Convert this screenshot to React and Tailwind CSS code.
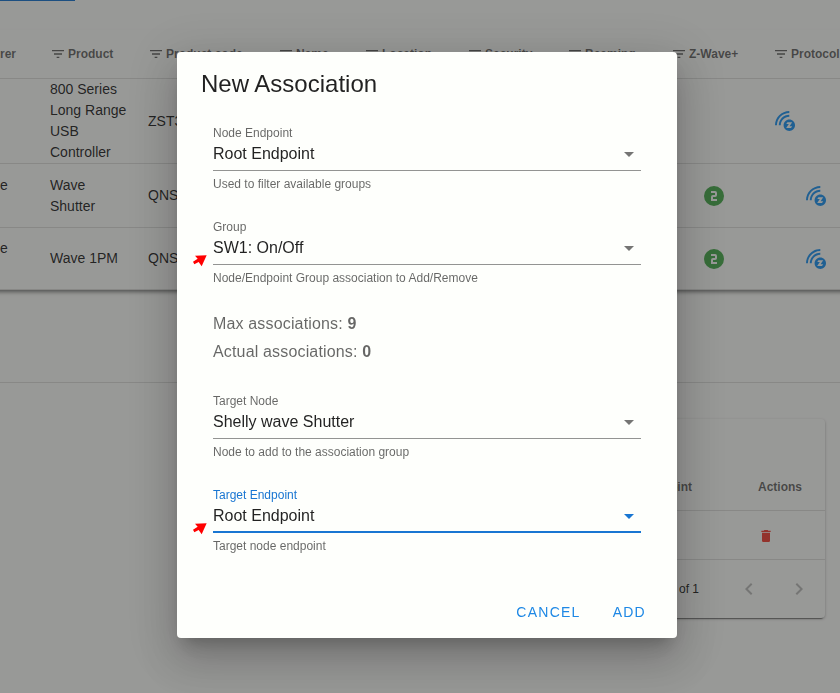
import React from "react";

const PATHS = {
  filter: "M6,13H18V11H6M3,6V8H21V6M10,18H14V16H10V18Z",
  zwave:
    "M16.3,10.58C13.14,10.58 10.6,13.13 10.6,16.28C10.6,19.43 13.15,22 16.3,22C19.45,22 22,19.43 22,16.28C22,13.13 19.45,10.58 16.3,10.58M18,19.08H13.19L15.81,15H13.31L14.4,13.23H19.18L16.57,17.31H19.18L18,19.08M16.3,3.93V2C8.41,2 2,8.42 2,16.31H3.92C3.94,9.46 9.5,3.93 16.3,3.93M16.3,7.74V5.82C10.5,5.82 5.81,10.53 5.81,16.31H7.73C7.75,11.58 11.59,7.74 16.3,7.74",
  plusBadge:
    "M9,7V9H13V11H11A2,2 0 0,0 9,13V17H15V15H11V13H13A2,2 0 0,0 15,11V9A2,2 0 0,0 13,7H9M12,2A10,10 0 0,1 22,12A10,10 0 0,1 12,22A10,10 0 0,1 2,12A10,10 0 0,1 12,2Z",
  trash: "M19,4H15.5L14.5,3H9.5L8.5,4H5V6H19M6,19A2,2 0 0,0 8,21H16A2,2 0 0,0 18,19V7H6V19Z",
  left: "M15.41,16.58L10.83,12L15.41,7.41L14,6L8,12L14,18L15.41,16.58Z",
  right: "M8.59,16.58L13.17,12L8.59,7.41L10,6L16,12L10,18L8.59,16.58Z",
  down: "M7,10L12,15L17,10H7Z",
};

function Icon({ name, className }) {
  return (
    <svg viewBox="0 0 24 24" fill="currentColor" fillRule="evenodd" className={className} aria-hidden="true">
      <path d={PATHS[name]} />
    </svg>
  );
}

function Arrow() {
  return (
    <svg viewBox="0 0 42 36" className="absolute -left-5 top-9 h-3 w-3.5 text-[#ff0000]" aria-hidden="true">
      <path fill="currentColor" d="M41 1L6 2L14 11L0 20L4 28L17 21L26 34Z" />
    </svg>
  );
}

function Field({ id, label, value, hint, active, marked }) {
  return (
    <div className="relative">
      {marked && <Arrow />}
      <label htmlFor={id} className={`block text-xs leading-4 ${active ? "text-[#1976d2]" : "text-black/60"}`}>
        {label}
      </label>
      <div className="relative">
        <select
          id={id}
          className={`block h-[30px] w-full appearance-none bg-transparent pr-8 text-base leading-6 text-black/87 outline-none ${
            active ? "border-b-2 border-[#1976d2] pb-[3px]" : "border-b border-black/42 pb-1"
          }`}
        >
          <option>{value}</option>
        </select>
        <Icon
          name="down"
          className={`pointer-events-none absolute right-0 top-px size-6 ${active ? "text-[#1976d2]" : "text-black/54"}`}
        />
      </div>
      <p className="mt-[5px] text-xs leading-4 text-black/60">{hint}</p>
    </div>
  );
}

const columns = ["Product", "Product code", "Name", "Location", "Security", "Beaming", "Z-Wave+", "Protocol"];

const nodes = [
  { maker: "", product: "800 Series Long Range USB Controller", code: "ZST39", plus: false, height: "h-[85px]" },
  { maker: "e", product: "Wave Shutter", code: "QNSH-001", plus: true, height: "h-16" },
  { maker: "e", product: "Wave 1PM", code: "QNSW-001", plus: true, height: "h-[62px]" },
];

function NodesTable() {
  return (
    <div className="-mx-2 overflow-hidden px-2 shadow-[0_3px_4px_-1px_rgba(0,0,0,0.5)]">
      <table className="w-[875px] table-fixed border-separate border-spacing-0 text-left text-sm leading-[21px] text-black/87">
        <colgroup>
          <col className="w-[34px]" />
          <col className="w-[98px]" />
          <col className="w-[130px]" />
          <col className="w-[86px]" />
          <col className="w-[103px]" />
          <col className="w-[100px]" />
          <col className="w-[104px]" />
          <col className="w-[102px]" />
          <col className="w-[118px]" />
        </colgroup>
        <thead>
          <tr className="h-[49px] text-xs text-black/60">
            <th className="border-b border-black/12">rer</th>
            {columns.map((c) => (
              <th key={c} className="whitespace-nowrap border-b border-black/12 pl-4">
                <span className="flex items-center gap-0.5">
                  <Icon name="filter" className="size-4 shrink-0" />
                  {c}
                </span>
              </th>
            ))}
          </tr>
        </thead>
        <tbody>
          {nodes.map((n) => (
            <tr key={n.product} className={n.height}>
              <td className="border-b border-black/12">
                <div className="h-[42px]">{n.maker}</div>
              </td>
              <td className="border-b border-black/12 pl-4">{n.product}</td>
              <td className="border-b border-black/12 pl-4">{n.code}</td>
              <td className="border-b border-black/12" colSpan={4} />
              <td className="border-b border-black/12 pl-8 pr-4">
                {n.plus && <Icon name="plusBadge" className="mx-auto size-6 text-[#4caf50]" />}
              </td>
              <td className="border-b border-black/12 px-4">
                <Icon name="zwave" className={`size-6 text-[#2196f3] ${n.plus ? "mx-auto" : ""}`} />
              </td>
            </tr>
          ))}
        </tbody>
      </table>
    </div>
  );
}

function AssociationsCard() {
  return (
    <div className="ml-auto mr-[15px] w-3/4 rounded pt-11 text-xs shadow-[0_3px_1px_-2px_rgba(0,0,0,0.4),0_1px_3px_rgba(0,0,0,0.3)]">
      <table className="w-full table-fixed border-separate border-spacing-0">
        <colgroup>
          <col />
          <col className="w-[83px]" />
        </colgroup>
        <thead>
          <tr className="h-12 text-black/60">
            <th className="border-b border-black/12 pr-[50px] text-right">Target Endpoint</th>
            <th className="border-b border-black/12 pl-4 text-left">Actions</th>
          </tr>
        </thead>
        <tbody>
          <tr className="h-[49px]">
            <td className="border-b border-black/12" />
            <td className="border-b border-black/12 pl-4 pt-0.5">
              <button type="button" aria-label="Delete" className="block text-[#f44336]">
                <Icon name="trash" className="size-4" />
              </button>
            </td>
          </tr>
        </tbody>
      </table>
      <div className="flex h-[58px] items-center justify-end gap-3.5 pr-2 text-black/87">
        <span className="mr-[18px]">1-1 of 1</span>
        <button type="button" aria-label="Previous page" className="flex size-9 items-center justify-center text-black/26">
          <Icon name="left" className="size-6" />
        </button>
        <button type="button" aria-label="Next page" className="flex size-9 items-center justify-center text-black/26">
          <Icon name="right" className="size-6" />
        </button>
      </div>
    </div>
  );
}

function AssociationDialog() {
  return (
    <div
      role="dialog"
      aria-labelledby="dialog-title"
      className="w-[500px] max-w-full rounded bg-[#fefffc] shadow-[0_11px_15px_-7px_rgba(0,0,0,0.2),0_24px_38px_3px_rgba(0,0,0,0.14),0_9px_46px_8px_rgba(0,0,0,0.12)]"
    >
      <h2 id="dialog-title" className="px-6 pt-4 text-2xl leading-8 text-black/87">
        New Association
      </h2>
      <div className="px-9 pt-[25px]">
        <div className="flex flex-col gap-[27px]">
          <Field id="node-endpoint" label="Node Endpoint" value="Root Endpoint" hint="Used to filter available groups" />
          <Field id="group" label="Group" value="SW1: On/Off" hint="Node/Endpoint Group association to Add/Remove" marked />
        </div>
        <div className="mb-[27px] mt-6 text-base leading-7 tracking-[0.01em] text-black/60">
          <p>
            Max associations: <b>9</b>
          </p>
          <p>
            Actual associations: <b>0</b>
          </p>
        </div>
        <div className="flex flex-col gap-[27px]">
          <Field id="target-node" label="Target Node" value="Shelly wave Shutter" hint="Node to add to the association group" />
          <Field id="target-endpoint" label="Target Endpoint" value="Root Endpoint" hint="Target node endpoint" active marked />
        </div>
      </div>
      <div className="flex justify-end pb-2 pr-[15px] pt-10 text-sm tracking-[0.09em] text-[#1e88e5]">
        <button type="button" className="h-9 px-4">
          CANCEL
        </button>
        <button type="button" className="h-9 px-4">
          ADD
        </button>
      </div>
    </div>
  );
}

export default function App() {
  return (
    <div className="min-h-screen overflow-hidden bg-[#fefffc] font-['Liberation_Sans',Arial,sans-serif]">
      <div className="h-[30px]">
        <div className="h-px w-[75px] bg-[#1976d2]" />
      </div>
      <NodesTable />
      <div className="mb-9 h-[93px] border-b border-black/12" />
      <AssociationsCard />
      <div className="fixed inset-0 flex items-center justify-center bg-[#212121]/46 pb-[3px] pl-3.5">
        <AssociationDialog />
      </div>
    </div>
  );
}
